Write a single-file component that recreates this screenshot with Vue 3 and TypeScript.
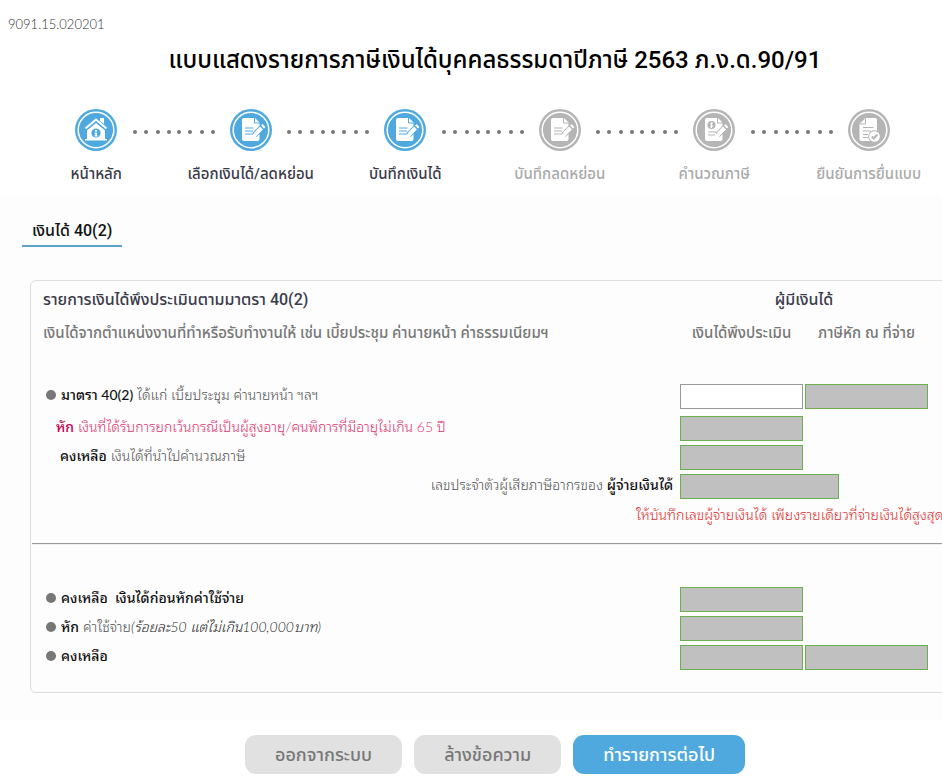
<script setup lang="ts">
type StepIcon = 'home' | 'edit' | 'money' | 'check'

interface Step {
  label: string
  icon: StepIcon
  done: boolean
}

const steps: Step[] = [
  { label: 'หน้าหลัก', icon: 'home', done: true },
  { label: 'เลือกเงินได้/ลดหย่อน', icon: 'edit', done: true },
  { label: 'บันทึกเงินได้', icon: 'edit', done: true },
  { label: 'บันทึกลดหย่อน', icon: 'edit', done: false },
  { label: 'คำนวณภาษี', icon: 'money', done: false },
  { label: 'ยืนยันการยื่นแบบ', icon: 'check', done: false },
]

const dots = [3, 14, 26, 37, 47, 58, 70, 81]
</script>

<template>
  <div class="viewport">
    <div class="page">
      <header class="top">
        <span class="code">9091.15.020201</span>
        <h1 class="title">แบบแสดงรายการภาษีเงินได้บุคคลธรรมดาปีภาษี 2563 ภ.ง.ด.90/91</h1>
      </header>

      <ol class="steps">
        <li v-for="(step, i) in steps" :key="step.label" class="step" :class="{ done: step.done }">
          <svg class="badge" viewBox="0 0 42 42" aria-hidden="true">
            <circle class="fill" cx="21" cy="21" r="21" />
            <circle class="ring" cx="21" cy="21" r="17.800" />
            <g v-if="step.icon === 'home'">
              <path class="paper" d="M25 9h4v6l-4-3z" />
              <path class="roof" d="M10.500 19.500 21 10.500l10.500 9" />
              <path class="paper" d="M12 21.500 21 14l9 7.500V30h2v1.500H10V30h2z" />
              <circle class="fill" cx="21" cy="24" r="4.600" />
              <path class="paper" d="M20 21h2v1.500h-2zM19.500 23.500H22v3h.8v1h-3.300v-1h.7v-2h-.7z" />
            </g>
            <g v-else-if="step.icon === 'check'">
              <path class="paper" d="M17.500 9H27a2 2 0 0 1 2 2v19a2 2 0 0 1-2 2H13.500a2 2 0 0 1-2-2V15z" />
              <path class="mark" d="M17.500 9.500V15H12M15 18.500h10.500M15 22h8M15 25.500h5M15 28.500h5" />
              <circle class="fill" cx="26.500" cy="27.500" r="6.300" />
              <circle class="paper" cx="26.500" cy="27.500" r="5.300" />
              <path class="tick" d="m23.800 27.500 2 2 3.500-4" />
            </g>
            <g v-else>
              <path class="paper" d="M14 9h11l4.500 4.500V30a2 2 0 0 1-2 2H14a2 2 0 0 1-2-2V11a2 2 0 0 1 2-2z" />
              <path class="mark" d="M24.500 9v5H30" />
              <template v-if="step.icon === 'money'">
                <circle class="fill" cx="18.500" cy="16" r="4" />
                <path class="coin" d="M20 14.300c-2.400-1.200-3.600 1.100-1.500 1.700s.8 2.900-1.600 1.700M18.500 13v6" />
                <path class="mark" d="M15 23h8M15 26h7" />
              </template>
              <path v-else class="mark" d="M15 19h8.500M15 22h8M15 25h8" />
              <path class="edge" d="m24.500 26 9-9" />
              <path class="pencil" d="m25.500 25 6-6M32.500 18l1.500-1.500" />
              <path class="paper" d="m23 28 1-4.500 3.500 3.500z" />
            </g>
          </svg>
          <span class="step-label">{{ step.label }}</span>
          <svg v-if="i < steps.length - 1" class="dots" viewBox="0 0 84 6" aria-hidden="true">
            <circle v-for="x in dots" :key="x" :cx="x" cy="3" r="2" />
          </svg>
        </li>
      </ol>

      <main class="content">
        <nav><a class="tab" href="#income">เงินได้ 40(2)</a></nav>

        <form id="income" class="card">
          <div class="row heading">
            <h2 class="card-title">รายการเงินได้พึงประเมินตามมาตรา 40(2)</h2>
            <h2 class="card-title owner">ผู้มีเงินได้</h2>
          </div>
          <div class="row heading sub">
            <span>เงินได้จากตำแหน่งงานที่ทำหรือรับทำงานให้ เช่น เบี้ยประชุม ค่านายหน้า ค่าธรรมเนียมฯ</span>
            <span id="col-income" class="col">เงินได้พึงประเมิน</span>
            <span id="col-tax" class="col">ภาษีหัก ณ ที่จ่าย</span>
          </div>

          <div class="group first">
            <div class="row lead">
              <label class="bullet" for="gross"><b>มาตรา 40(2)</b> ได้แก่ เบี้ยประชุม ค่านายหน้า ฯลฯ</label>
              <input id="gross" class="box" type="text" />
              <input class="box locked" type="text" readonly aria-labelledby="col-tax" />
            </div>
            <div class="row">
              <label class="exempt" for="exempt"><b>หัก</b> เงินที่ได้รับการยกเว้นกรณีเป็นผู้สูงอายุ/คนพิการที่มีอายุไม่เกิน 65 ปี</label>
              <input id="exempt" class="box locked" type="text" readonly />
            </div>
            <div class="row">
              <label class="remain" for="remain"><b>คงเหลือ</b> เงินได้ที่นำไปคำนวณภาษี</label>
              <input id="remain" class="box locked" type="text" readonly />
            </div>
            <div class="row">
              <label class="payer" for="payer">เลขประจำตัวผู้เสียภาษีอากรของ <b>ผู้จ่ายเงินได้</b></label>
              <input id="payer" class="box locked wide" type="text" readonly />
            </div>
            <p class="note">ให้บันทึกเลขผู้จ่ายเงินได้ เพียงรายเดียวที่จ่ายเงินได้สูงสุด</p>
          </div>

          <hr class="rule" />

          <div class="group second">
            <div class="row">
              <label class="bullet" for="before"><b>คงเหลือ&nbsp; เงินได้ก่อนหักค่าใช้จ่าย</b></label>
              <input id="before" class="box locked" type="text" readonly />
            </div>
            <div class="row">
              <label class="bullet" for="expense"><b>หัก</b> ค่าใช้จ่าย<i>(ร้อยละ50 แต่ไม่เกิน100,000บาท)</i></label>
              <input id="expense" class="box locked" type="text" readonly />
            </div>
            <div class="row">
              <label class="bullet" for="net"><b>คงเหลือ</b></label>
              <input id="net" class="box locked" type="text" readonly />
              <input class="box locked" type="text" readonly aria-labelledby="col-tax" />
            </div>
          </div>
        </form>
      </main>

      <footer class="actions">
        <button class="btn" type="button">ออกจากระบบ</button>
        <button class="btn" type="button">ล้างข้อความ</button>
        <button class="btn primary" type="button">ทำรายการต่อไป</button>
      </footer>
    </div>
  </div>
</template>

<style>
body {
  background: #fff;
}
</style>

<style scoped>
.viewport {
  overflow: hidden;
}

.page {
  min-width: 990px;
  color: #555;
  font-family: Lato, "Noto Sans Thai Looped", "Noto Sans", sans-serif;
  font-size: 14px;
  font-weight: 300;
  line-height: 20px;
}

.title,
.steps,
.tab,
.heading,
.btn {
  font-family: Roboto, "Noto Sans Thai", "Noto Sans", sans-serif;
}

.top {
  padding-top: 14px;
}

.code {
  display: block;
  padding-left: 8px;
  color: #333;
  font-size: 13px;
}

.title {
  margin: 8px 0 0;
  color: #000;
  font-size: 24px;
  font-weight: 500;
  line-height: 36px;
  text-align: center;
}

.steps {
  display: grid;
  grid-template-columns: repeat(6, 1fr);
  margin: 0;
  padding: 31px 44px 11px 19px;
  list-style: none;
}

.step {
  position: relative;
  display: flex;
  flex-direction: column;
  align-items: center;
  gap: 13px;
  color: #aaa;
  font-size: 15px;
  font-weight: 500;
  white-space: nowrap;
}

.step.done {
  color: #3b3b4a;
}

.badge {
  width: 42px;
  height: 42px;
  color: #b5b5b5;
}

.done .badge {
  color: #4fa9de;
}

.fill {
  fill: currentColor;
}

.ring {
  fill: none;
  stroke: #fff;
  stroke-width: 1.5;
}

.paper {
  fill: #fff;
}

.roof,
.coin {
  fill: none;
  stroke: #fff;
}

.roof {
  stroke-width: 2;
}

.mark,
.tick,
.edge {
  fill: none;
  stroke: currentColor;
}

.mark {
  stroke-width: 1;
}

.tick {
  stroke-width: 2;
}

.edge {
  stroke-width: 6;
}

.pencil {
  fill: none;
  stroke: #fff;
  stroke-width: 4;
}

.dots {
  position: absolute;
  top: 20px;
  left: 100%;
  width: 84px;
  height: 6px;
  margin-left: -42px;
  fill: #777;
}

.content {
  padding: 20px 30px 28px;
  background: #fdfdfd;
}

nav {
  display: flex;
  margin-left: -8px;
}

.tab {
  padding: 5px 10px 3px;
  border-bottom: 2px solid #5ba3cd;
  color: #111;
  font-size: 16px;
  font-weight: 500;
  line-height: 22px;
  text-decoration: none;
}

.card {
  margin-top: 33px;
  padding: 4px 0 22px;
  border: 1px solid #ddd;
  border-radius: 6px;
}

.row {
  display: grid;
  grid-template-columns: minmax(0, 1fr) 123px 123px;
  column-gap: 2px;
  align-items: center;
  padding-right: 31px;
  white-space: nowrap;
}

.heading {
  padding-left: 12px;
}

.card-title {
  margin: 0;
  color: #3b3b4a;
  font-size: 16px;
  font-weight: 500;
  line-height: 30px;
}

.owner {
  grid-column: 2 / span 2;
  text-align: center;
}

.sub {
  color: #777;
  font-size: 15px;
  font-weight: 500;
  line-height: 36px;
}

.col {
  text-align: center;
}

.group {
  display: grid;
  row-gap: 4px;
}

.group label {
  padding-bottom: 3px;
}

.first {
  padding-top: 33px;
}

.lead {
  margin-bottom: 3px;
}

.second {
  padding-top: 42px;
}

.bullet {
  display: flex;
  align-items: center;
  padding-left: 15px;
  white-space: pre;
}

.bullet::before {
  content: "";
  width: 10px;
  height: 10px;
  margin-right: 5px;
  border-radius: 50%;
  background: #777;
}

.row b {
  color: #111;
  font-weight: 500;
}

.row i {
  color: #222;
}

.exempt {
  padding-left: 25px;
  color: #e0356f;
}

.row .exempt b {
  color: #c8004f;
}

.remain {
  padding-left: 29px;
}

.payer {
  padding-right: 5px;
  text-align: right;
}

.box {
  box-sizing: border-box;
  width: 100%;
  height: 25px;
  padding: 2px 4px;
  border: 1px solid #999;
  border-radius: 0;
  background: #fff;
  font: inherit;
  text-align: right;
}

.locked {
  border-color: #6ab04c;
  background: #c0c0c0;
}

.wide {
  grid-column: 2 / span 2;
  width: 159px;
}

.note {
  margin: 2px 0 0;
  padding-left: 605px;
  color: #e0302f;
  white-space: nowrap;
}

.rule {
  height: 2px;
  margin: 18px 1px 0;
  border: 0;
  border-top: 1px solid #999;
  box-sizing: border-box;
  background: #eee;
}

.actions {
  display: flex;
  justify-content: center;
  gap: 12px;
  padding: 14px 0 10px;
}

.btn {
  height: 39px;
  padding: 0 30px;
  border: 0;
  border-radius: 11px;
  background: #e1e1e1;
  color: #777;
  font-size: 18px;
  font-weight: 500;
  line-height: 39px;
}

.primary {
  background: #4fa9de;
  color: #fff;
}
</style>
